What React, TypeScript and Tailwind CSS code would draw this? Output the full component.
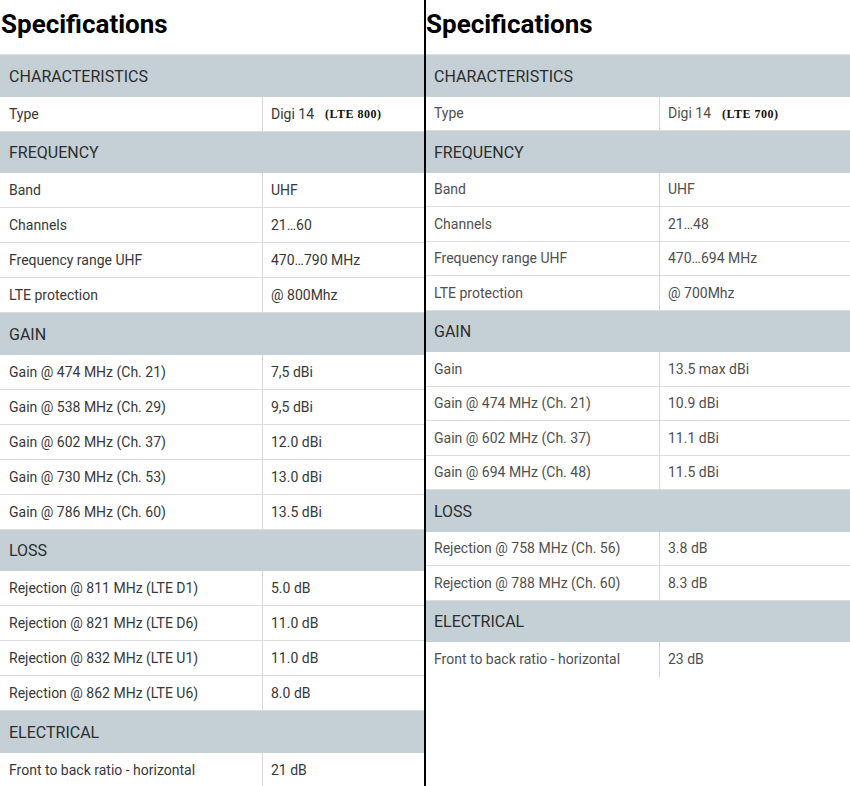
import React from 'react';

type Row = { label: string; value: string; note?: string };
type Section = { title: string; rows: Row[] };

const left: Section[] = [
  { title: 'Characteristics', rows: [{ label: 'Type', value: 'Digi 14', note: '(LTE 800)' }] },
  {
    title: 'Frequency',
    rows: [
      { label: 'Band', value: 'UHF' },
      { label: 'Channels', value: '21…60' },
      { label: 'Frequency range UHF', value: '470…790 MHz' },
      { label: 'LTE protection', value: '@ 800Mhz' },
    ],
  },
  {
    title: 'Gain',
    rows: [
      { label: 'Gain @ 474 MHz (Ch. 21)', value: '7,5 dBi' },
      { label: 'Gain @ 538 MHz (Ch. 29)', value: '9,5 dBi' },
      { label: 'Gain @ 602 MHz (Ch. 37)', value: '12.0 dBi' },
      { label: 'Gain @ 730 MHz (Ch. 53)', value: '13.0 dBi' },
      { label: 'Gain @ 786 MHz (Ch. 60)', value: '13.5 dBi' },
    ],
  },
  {
    title: 'Loss',
    rows: [
      { label: 'Rejection @ 811 MHz (LTE D1)', value: '5.0 dB' },
      { label: 'Rejection @ 821 MHz (LTE D6)', value: '11.0 dB' },
      { label: 'Rejection @ 832 MHz (LTE U1)', value: '11.0 dB' },
      { label: 'Rejection @ 862 MHz (LTE U6)', value: '8.0 dB' },
    ],
  },
  { title: 'Electrical', rows: [{ label: 'Front to back ratio - horizontal', value: '21 dB' }] },
];

const right: Section[] = [
  { title: 'Characteristics', rows: [{ label: 'Type', value: 'Digi 14', note: '(LTE 700)' }] },
  {
    title: 'Frequency',
    rows: [
      { label: 'Band', value: 'UHF' },
      { label: 'Channels', value: '21…48' },
      { label: 'Frequency range UHF', value: '470…694 MHz' },
      { label: 'LTE protection', value: '@ 700Mhz' },
    ],
  },
  {
    title: 'Gain',
    rows: [
      { label: 'Gain', value: '13.5 max dBi' },
      { label: 'Gain @ 474 MHz (Ch. 21)', value: '10.9 dBi' },
      { label: 'Gain @ 602 MHz (Ch. 37)', value: '11.1 dBi' },
      { label: 'Gain @ 694 MHz (Ch. 48)', value: '11.5 dBi' },
    ],
  },
  {
    title: 'Loss',
    rows: [
      { label: 'Rejection @ 758 MHz (Ch. 56)', value: '3.8 dB' },
      { label: 'Rejection @ 788 MHz (Ch. 60)', value: '8.3 dB' },
    ],
  },
  { title: 'Electrical', rows: [{ label: 'Front to back ratio - horizontal', value: '23 dB' }] },
];

function SpecTable({ sections, labelW, compact, textColor }: { sections: Section[]; labelW: string; compact?: boolean; textColor: string }) {
  const rowH = compact ? 'h-[34.5px]' : 'h-[35px]';
  const pad = compact ? 'px-[8px]' : 'px-[9px]';
  return (
    <div className="border-t border-[#dedede]">
      {sections.map((s, si) => (
        <div key={s.title}>
          <div className={`h-[41.5px] flex items-center ${pad} pt-[2px] bg-[#c4d0d5] uppercase text-[16px] text-[#2d2d2d]`}>{s.title}</div>
          {s.rows.map((r, ri) => {
            const last = si === sections.length - 1 && ri === s.rows.length - 1;
            return (
              <div key={r.label} className={`${rowH} flex text-[14px] ${textColor} ${last ? '' : 'border-b border-[#dcdcdc]'}`}>
                <div className={`${labelW} shrink-0 flex items-center ${pad} pt-px border-r border-[#d6d6d6]`}>{r.label}</div>
                <div className="flex-1 flex items-center px-[8px] pt-px">
                  {r.value}
                  {r.note && (
                    <span className="ml-[11px] text-[12px] font-bold text-[#111] tracking-[0.5px]" style={{ fontFamily: '"Liberation Serif", serif' }}>
                      {r.note}
                    </span>
                  )}
                </div>
              </div>
            );
          })}
        </div>
      ))}
    </div>
  );
}

export default function App() {
  return (
    <div className="w-[850px] h-[786px] overflow-hidden bg-white flex" style={{ fontFamily: 'Roboto, "Noto Sans", sans-serif' }}>
      <div className="w-[424px] shrink-0">
        <h1 className="h-[54px] pl-[1px] pt-[7px] text-[26px] font-bold text-black leading-[34px]">Specifications</h1>
        <SpecTable sections={left} labelW="w-[263px]" textColor="text-[#383838]" />
      </div>
      <div className="w-[2px] shrink-0 bg-black" />
      <div className="flex-1">
        <h1 className="h-[54px] pt-[7px] text-[26px] font-bold text-black leading-[34px]">Specifications</h1>
        <SpecTable sections={right} labelW="w-[234px]" compact textColor="text-[#505050]" />
      </div>
    </div>
  );
}
